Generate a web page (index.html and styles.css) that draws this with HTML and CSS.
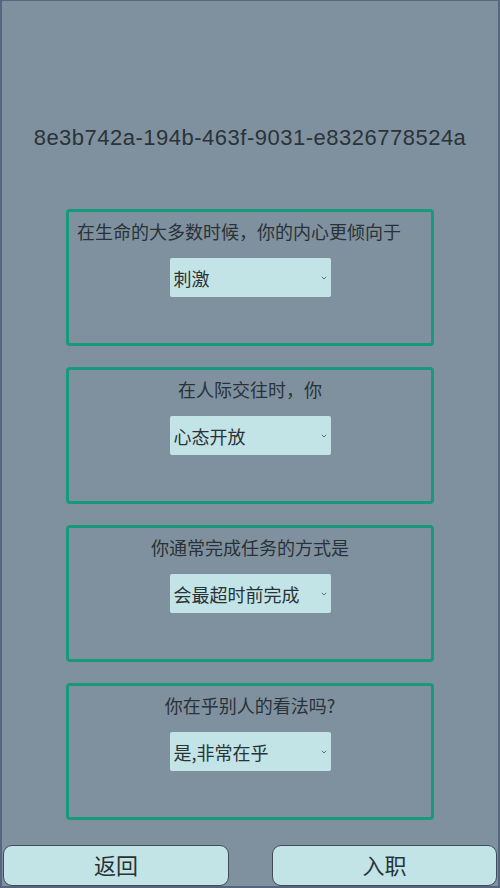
FILE: index.html
```html
<!DOCTYPE html>
<html lang="zh">
<head>
<meta charset="utf-8">
<link rel="stylesheet" href="styles.css">
</head>
<body>
<div class="screen">
  <div class="uuid">8e3b742a-194b-463f-9031-e8326778524a</div>
  <div class="questions">
    <div class="card">
      <div class="q q-left">在生命的大多数时候，你的内心更倾向于</div>
      <div class="select"><span>刺激</span><svg class="chev" viewBox="0 0 6 4" width="6" height="4"><path d="M0.8 0.8 L3 3 L5.2 0.8" fill="none" stroke="#55626a" stroke-width="0.9"/></svg></div>
    </div>
    <div class="card">
      <div class="q">在人际交往时，你</div>
      <div class="select"><span>心态开放</span><svg class="chev" viewBox="0 0 6 4" width="6" height="4"><path d="M0.8 0.8 L3 3 L5.2 0.8" fill="none" stroke="#55626a" stroke-width="0.9"/></svg></div>
    </div>
    <div class="card">
      <div class="q">你通常完成任务的方式是</div>
      <div class="select"><span>会最超时前完成</span><svg class="chev" viewBox="0 0 6 4" width="6" height="4"><path d="M0.8 0.8 L3 3 L5.2 0.8" fill="none" stroke="#55626a" stroke-width="0.9"/></svg></div>
    </div>
    <div class="card">
      <div class="q">你在乎别人的看法吗?</div>
      <div class="select"><span>是,非常在乎</span><svg class="chev" viewBox="0 0 6 4" width="6" height="4"><path d="M0.8 0.8 L3 3 L5.2 0.8" fill="none" stroke="#55626a" stroke-width="0.9"/></svg></div>
    </div>
  </div>
  <div class="footer">
    <div class="btn btn-left">返回</div>
    <div class="btn btn-right">入职</div>
  </div>
</div>
</body>
</html>
```
FILE: styles.css
```css
html, body {
  margin: 0;
  padding: 0;
}
body {
  font-family: "Noto Sans CJK SC", "Noto Sans", sans-serif;
  color: #2a3238;
}
.screen {
  width: 500px;
  height: 888px;
  box-sizing: border-box;
  border: 2px solid #56667f;
  border-top-width: 1px;
  background: #7f919f;
  display: flex;
  flex-direction: column;
  align-items: center;
}
.uuid {
  margin-top: 124px;
  font-family: "Liberation Sans", Arial, sans-serif;
  font-size: 22px;
  letter-spacing: 0.5px;
  line-height: 26px;
  color: #2b3338;
  white-space: nowrap;
}
.questions {
  margin-top: 58px;
  width: 368px;
  display: flex;
  flex-direction: column;
  gap: 21px;
}
.card {
  height: 137px;
  box-sizing: border-box;
  border: 3px solid #17997b;
  border-radius: 4px;
  display: flex;
  flex-direction: column;
  align-items: center;
}
.q {
  margin-top: 7px;
  font-size: 18px;
  line-height: 24px;
  white-space: nowrap;
}
.q-left {
  align-self: flex-start;
  margin-left: 8px;
}
.select {
  margin-top: 15px;
  width: 161px;
  height: 39px;
  box-sizing: border-box;
  background: #c3e4e6;
  border-radius: 2px;
  display: flex;
  align-items: center;
  justify-content: space-between;
  padding: 0 4px 0 4px;
  font-size: 18px;
}
.chev {
  margin-top: 1px;
}
.footer {
  margin-top: auto;
  width: 100%;
  display: flex;
  justify-content: space-between;
  padding: 0 1px;
  box-sizing: border-box;
}
.btn {
  height: 41px;
  box-sizing: border-box;
  background: #c2e4e6;
  border: 1px solid #3f4c57;
  border-radius: 9px;
  display: flex;
  align-items: center;
  justify-content: center;
  padding-bottom: 3px;
  font-size: 22px;
  color: #2a3238;
}
.btn-left { width: 226px; }
.btn-right { width: 225px; }
```
